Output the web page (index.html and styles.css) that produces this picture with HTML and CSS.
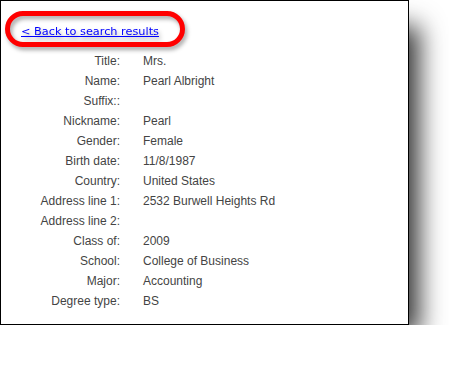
FILE: index.html
```html
<!DOCTYPE html>
<html lang="en">
<head>
    <meta charset="UTF-8">
    <title>Constituent details</title>
    <link rel="stylesheet" href="styles.css">
</head>
<body>

<div class="panel">
    <div class="callout">
        <a href="#" class="back-link">&lt; Back to search results</a>
    </div>

    <div class="details">
        <div class="label">Title:</div><div class="value">Mrs.</div>
        <div class="label">Name:</div><div class="value">Pearl Albright</div>
        <div class="label">Suffix::</div><div class="value"></div>
        <div class="label">Nickname:</div><div class="value">Pearl</div>
        <div class="label">Gender:</div><div class="value">Female</div>
        <div class="label">Birth date:</div><div class="value">11/8/1987</div>
        <div class="label">Country:</div><div class="value">United States</div>
        <div class="label">Address line 1:</div><div class="value">2532 Burwell Heights Rd</div>
        <div class="label">Address line 2:</div><div class="value"></div>
        <div class="label">Class of:</div><div class="value">2009</div>
        <div class="label">School:</div><div class="value">College of Business</div>
        <div class="label">Major:</div><div class="value">Accounting</div>
        <div class="label">Degree type:</div><div class="value">BS</div>
    </div>
</div>

</body>
</html>
```

FILE: styles.css
```css
body {
    margin: 0;
    padding: 0;
    background: #ffffff;
    font-family: "Liberation Sans", Arial, sans-serif;
}

.panel {
    width: 407px;
    height: 323px;
    border: 1px solid #000000;
    background: #ffffff;
    box-shadow: 18px 18px 24px -8px rgba(0, 0, 0, 0.8);
}

.callout {
    display: inline-block;
    margin: 10px 0 0 4px;
    padding: 0 21px 0 11px;
    height: 26px;
    line-height: 27px;
    border: 5px solid #ff0000;
    border-radius: 20px;
    filter: drop-shadow(2px 3px 2px rgba(0, 0, 0, 0.35));
}

.back-link {
    font-family: "DejaVu Sans", Verdana, sans-serif;
    font-size: 11.3px;
    color: #0000ff;
    text-decoration: underline;
}

.details {
    display: grid;
    grid-template-columns: 119px 1fr;
    column-gap: 23px;
    grid-auto-rows: 20px;
    margin-top: 4px;
    font-size: 12px;
    line-height: 20px;
    color: #444444;
}

.label {
    text-align: right;
}
```
